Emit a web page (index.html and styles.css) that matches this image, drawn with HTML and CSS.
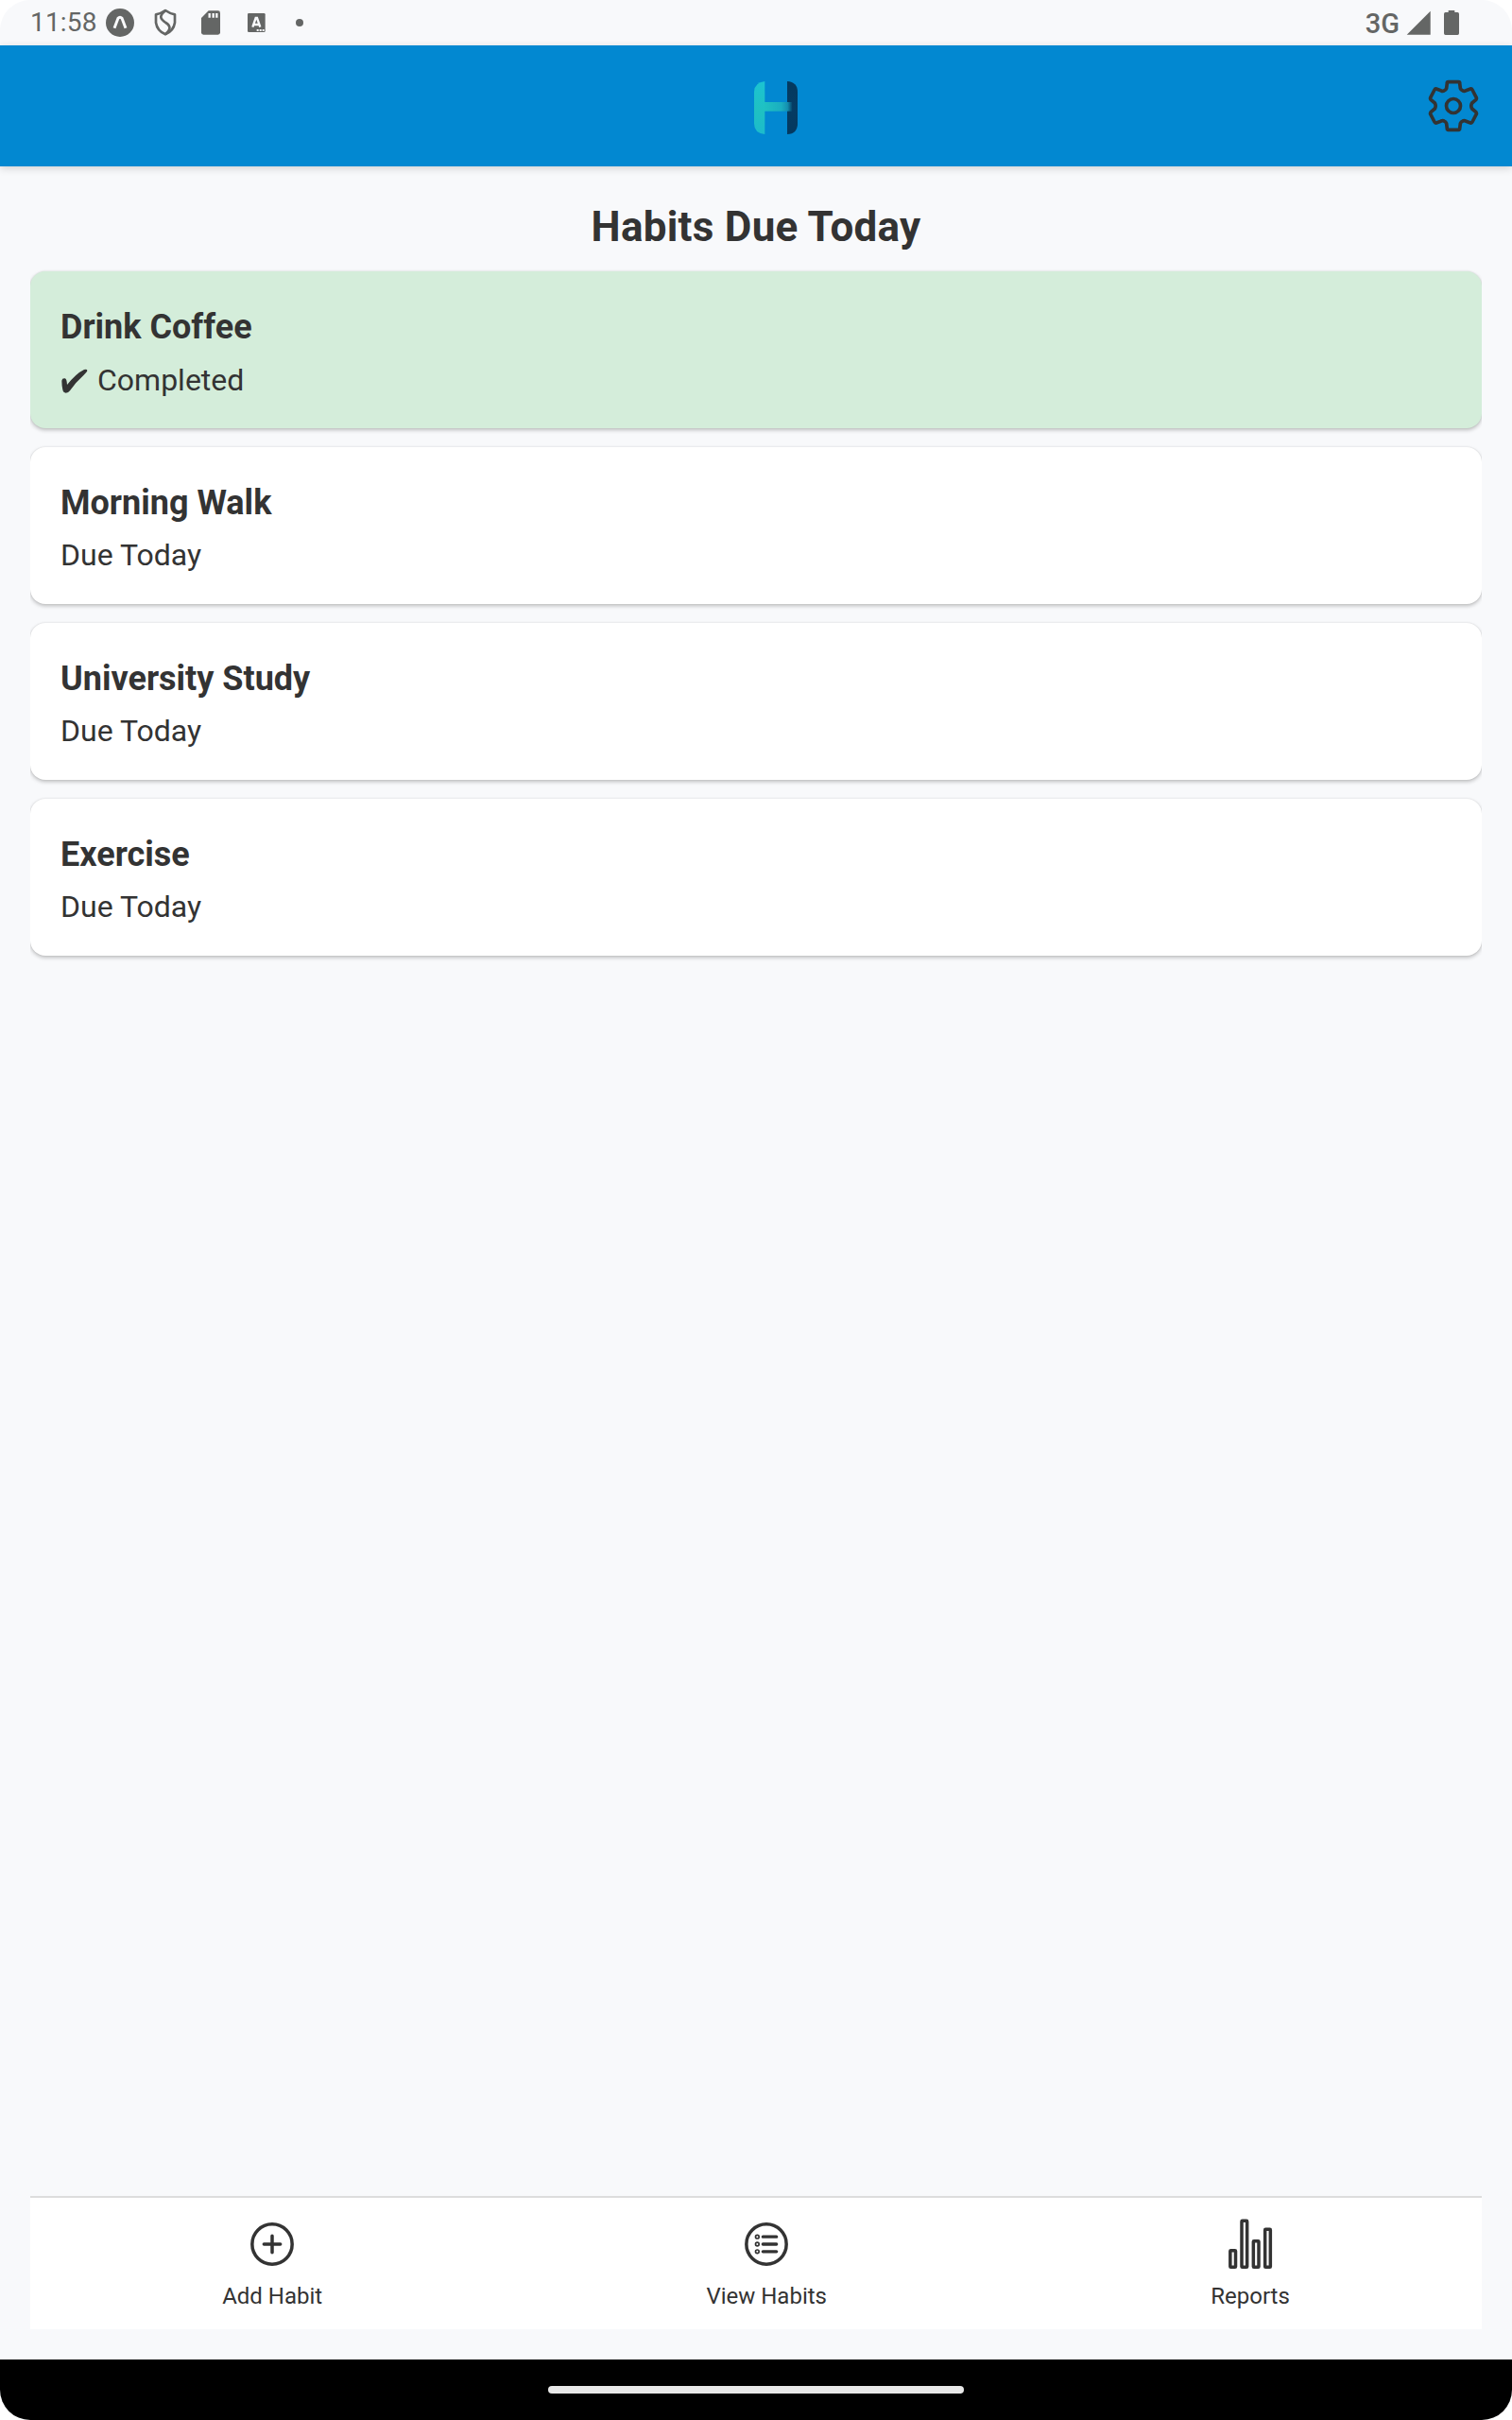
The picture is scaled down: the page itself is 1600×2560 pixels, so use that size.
FILE: index.html
```html
<!DOCTYPE html>
<html lang="en">
<head>
<meta charset="utf-8">
<title>Habits</title>
<link rel="stylesheet" href="styles.css">
</head>
<body>
<div class="screen">
  <div class="status">
    <span class="clock">11:58</span>
    <svg class="s-expo" viewBox="336 24 90 96"><circle cx="381" cy="72" r="45" fill="#646665"/><path d="M363 89L375 58Q381 51 387 58L399 89" fill="none" stroke="#f8f9fb" stroke-width="9"/></svg>
    <svg class="s-shield" viewBox="489 24 72 96"><path d="M525 33Q509 44 495 46V72Q499 98 525 109Q551 98 555 72V46Q541 44 525 33Z" fill="none" stroke="#646665" stroke-width="8" stroke-linejoin="round"/><path d="M525 34C504 50 508 60 526 72C544 83 541 96 526 108" fill="none" stroke="#646665" stroke-width="8"/></svg>
    <svg class="s-sd" viewBox="639 24 60 96"><path d="M662 34H692Q699 34 699 41V103Q699 110 692 110H646Q639 110 639 103V57Z" fill="#646665"/><path d="M665 42V56M677 42V56M688 42V56" stroke="#f8f9fb" stroke-width="7"/></svg>
    <svg class="s-a" viewBox="785 24 57 96"><rect x="785" y="42" width="56" height="60" rx="4" fill="#646665"/><path d="M801 86L811 57H815L825 86M804 78H822" fill="none" stroke="#f8f9fb" stroke-width="7"/><path d="M814 96H838" stroke="#f8f9fb" stroke-width="6" stroke-dasharray="6 3"/></svg>
    <svg class="s-dot" viewBox="939 24 24 96"><circle cx="951" cy="72" r="12" fill="#646665"/></svg>
    <span class="network">3G</span>
    <svg class="s-signal" viewBox="264 24 78 96"><path d="M266 110L341 35V110Z" fill="#646665"/></svg>
    <svg class="s-battery" viewBox="384 24 48 96"><path d="M398 33H418V39H427Q432 39 432 44V106Q432 111 427 111H389Q384 111 384 106V44Q384 39 389 39H398Z" fill="#646665"/></svg>
  </div>
  <header class="header">
    <svg class="logo" viewBox="84 48 138 168">
      <defs>
        <linearGradient id="teal" x1="0" y1="0" x2="0" y2="1"><stop offset="0" stop-color="#1cc3d2"/><stop offset=".55" stop-color="#1fc1c2"/><stop offset="1" stop-color="#1cbbcc"/></linearGradient>
        <linearGradient id="bar" gradientUnits="userSpaceOnUse" x1="117" x2="206" y1="0" y2="0"><stop offset="0" stop-color="#1fc1c2"/><stop offset=".6" stop-color="#1aaec0"/><stop offset=".82" stop-color="#1490b0"/><stop offset="1" stop-color="#053c63"/></linearGradient>
        <linearGradient id="navy" x1="0" y1="0" x2="0" y2="1"><stop offset="0" stop-color="#04395f"/><stop offset=".5" stop-color="#053c63"/><stop offset="1" stop-color="#04395f"/></linearGradient>
      </defs>
      <path d="M118 48Q84 52 84 82V182Q84 212 118 216Z" fill="url(#teal)"/>
      <path d="M189 48Q222 50 222 82V182Q222 214 189 216Z" fill="url(#navy)"/>
      <path d="M117 114H206V143H117Z" fill="url(#bar)"/>
    </svg>
    <svg class="gear" viewBox="330 252 168 168" fill="none" stroke="#333" stroke-width="11" stroke-linejoin="round"><path d="M398 260H430Q434 260 434 264L436 280Q438 286 444 288Q448 291 454 287L468 282Q472 281 474 285L487 310Q488 313 486 316L473 327Q468 336 473 345L486 356Q488 359 487 362L474 387Q472 391 468 390L454 385Q448 381 444 384Q438 386 436 392L434 408Q434 412 430 412H398Q394 412 394 408L392 392Q390 386 384 384Q380 381 374 385L360 390Q356 391 354 387L341 362Q340 359 342 356L355 345Q360 336 355 327L342 316Q340 313 341 310L354 285Q356 281 360 282L374 287Q380 291 384 288Q390 286 392 280L394 264Q394 260 398 260Z"/><circle cx="414" cy="336" r="22.500"/></svg>
  </header>
  <main class="content">
    <h1 class="title">Habits Due Today</h1>
    <div class="list">
      <div class="card done"><h2>Drink Coffee</h2><p><svg class="check" viewBox="194 690 84 78"><path d="M195 728Q196 720 205 721Q211 722 212 741Q241 705 266 693Q276 691 276 696Q276 700 265 710Q240 732 221 760Q216 767 208 767Q200 767 198 757Q195 742 195 728Z" fill="#333"/></svg>Completed</p></div>
      <div class="card"><h2>Morning Walk</h2><p>Due Today</p></div>
      <div class="card"><h2>University Study</h2><p>Due Today</p></div>
      <div class="card"><h2>Exercise</h2><p>Due Today</p></div>
    </div>
    <nav class="tabs">
      <div class="tab"><svg viewBox="180 138 168 168" fill="none" stroke="#333" stroke-width="10.500" stroke-linecap="round"><circle cx="264" cy="222" r="63.500"/><path d="M238 222H290M264 196V248"/></svg><span>Add Habit</span></div>
      <div class="tab"><svg viewBox="189 138 168 168" fill="none" stroke="#333" stroke-width="10.500" stroke-linecap="round"><circle cx="273" cy="222" r="63.500"/><path d="M262 198.500H305M262 222H305M262 245.500H305" stroke-width="10"/><g stroke-width="5"><circle cx="244" cy="198.500" r="5.500"/><circle cx="244" cy="222" r="5.500"/><circle cx="244" cy="245.500" r="5.500"/></g></svg><span>View Habits</span></div>
      <div class="tab"><svg viewBox="165 138 168 168" fill="none" stroke="#333" stroke-width="10.500"><rect x="185.500" y="242" width="17" height="53" rx="2"/><rect x="222" y="148" width="17" height="147" rx="2"/><rect x="259" y="212" width="17" height="83" rx="2"/><rect x="296" y="175" width="17" height="120" rx="2"/></svg><span>Reports</span></div>
    </nav>
  </main>
  <div class="system-nav"><div class="pill"></div></div>
</div>
</body>
</html>
```
FILE: styles.css
```css
* { box-sizing: border-box; }
body { margin: 0; background: #fff; font-family: Roboto, sans-serif; color: #333; }
h1, h2, p { margin: 0; }
svg { display: block; flex: none; }
.screen {
  width: 1600px; height: 2560px;
  display: flex; flex-direction: column;
  background: #f8f9fb; border-radius: 32px; overflow: hidden;
}
.status { height: 48px; flex: none; display: flex; align-items: center; padding: 0 56px 0 32px; color: #646665; }
.status svg { height: 32px; }
.clock { width: 80px; font-size: 28px; line-height: 48px; letter-spacing: .2px; }
.s-expo { width: 30px; }
.s-shield { width: 24px; margin-left: 21px; }
.s-sd { width: 20px; margin-left: 26px; }
.s-a { width: 19px; margin-left: 29px; }
.s-dot { width: 8px; margin-left: 32px; }
.network { margin-left: auto; font-size: 29px; font-weight: 500; line-height: 48px; padding-top: 1px; }
.s-signal { width: 26px; margin-left: 7px; }
.s-battery { width: 16px; margin-left: 14px; }
.header {
  height: 128px; flex: none; padding: 0 34px 0 798px;
  display: flex; align-items: center; justify-content: space-between;
  background: #0288d1; box-shadow: 0 2px 8px rgba(0, 0, 0, .17); position: relative;
}
.logo { width: 46px; height: 56px; margin-top: 4px; }
.gear { width: 56px; height: 56px; }
.content { flex: 1; display: flex; flex-direction: column; padding: 37px 32px 32px; }
.title { font-size: 44px; font-weight: 700; line-height: 54px; letter-spacing: .25px; text-align: center; }
.list { flex: 1; display: flex; flex-direction: column; gap: 20px; padding-top: 20px; overflow: hidden; }
.card { height: 166px; flex: none; padding: 37px 32px; background: #fff; border-radius: 16px; box-shadow: 0 2px 4px rgba(0, 0, 0, .24), 0 0 2px rgba(0, 0, 0, .1); }
.done { background: #d4edda; }
.card h2 { font-size: 36px; line-height: 44px; font-weight: 700; }
.card p { margin-top: 14px; font-size: 32px; line-height: 38px; }
.done p { display: flex; align-items: center; margin-top: 15px; }
.check { width: 28px; height: 26px; margin: 2px 10px 0 1px; }
.tabs { height: 141px; flex: none; display: flex; justify-content: space-around; padding-top: 21px; background: #fff; border-top: 2px solid #ddd; }
.tab { display: flex; flex-direction: column; align-items: center; font-size: 24px; line-height: 28px; }
.tab svg { width: 56px; height: 56px; margin-bottom: 13px; }
.system-nav { height: 64px; flex: none; display: flex; align-items: center; justify-content: center; background: #000; }
.pill { width: 440px; height: 8px; border-radius: 4px; background: #e8e8e8; }
```
